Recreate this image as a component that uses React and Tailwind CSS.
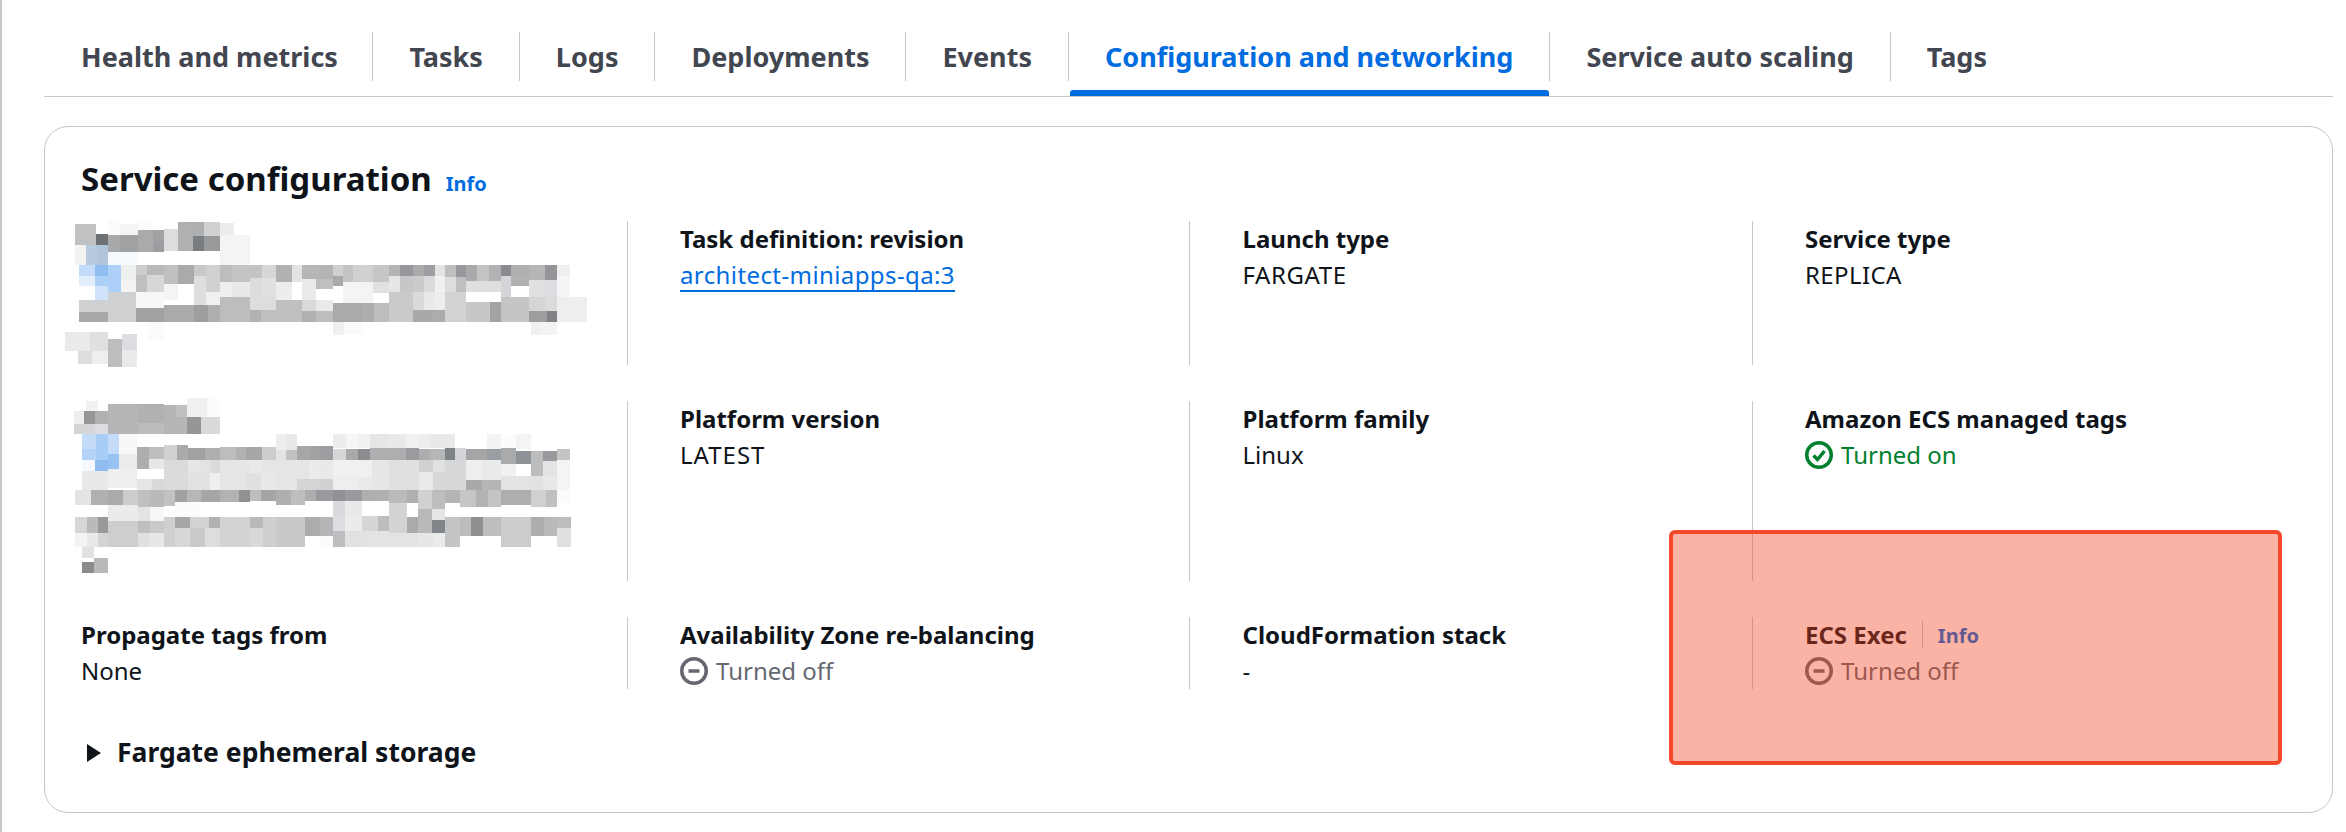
const tabs = [
  "Health and metrics",
  "Tasks",
  "Logs",
  "Deployments",
  "Events",
  "Configuration and networking",
  "Service auto scaling",
  "Tags",
];

// pixelated (redacted) blocks, cells are [x, y, w, h, colour] at 3x
const blurTopA = [
  [45,27,63,63,"#c0c1c3"],[108,57,36,33,"#6e7174"],[144,18,36,42,"#fbfbfb"],[180,27,54,33,"#f4f4f4"],[234,15,45,30,"#fbfbfb"],
  [144,60,36,50,"#a8a9ab"],[180,60,54,50,"#a0a1a3"],[234,45,45,65,"#a9aaac"],[279,45,33,33,"#a1a2a4"],[279,78,33,32,"#9c9da1"],
  [312,42,42,66,"#dcdddf"],[354,21,45,87,"#afb0b2"],[399,21,33,42,"#aeafb1"],[432,21,48,42,"#d0d1d3"],[480,24,42,36,"#ebeded"],
  [399,63,33,45,"#7a7d80"],[432,63,48,45,"#98999b"],[480,60,90,90,"#f4f4f4"],[45,90,33,60,"#f3f3f3"],[78,90,33,60,"#b8cade"],
  [111,90,33,60,"#b0c4da"],[144,110,90,40,"#f6f9fe"],[57,150,48,33,"#c4dcfa"],[105,150,39,33,"#90bdf0"],[144,150,39,33,"#acd0f8"],
  [57,183,48,30,"#e3eefc"],[105,183,39,30,"#acd0f8"],[144,183,39,48,"#acd0f8"],[105,213,39,42,"#d0e3fb"],[183,150,45,48,"#eeefef"],
  [183,198,45,33,"#f3f3f3"],[228,150,33,30,"#cbcccd"],[228,180,33,51,"#bebfc1"],[261,150,51,30,"#b8b9bb"],[261,180,51,51,"#d6d7d9"],
  [312,150,42,57,"#bfc0c2"],[354,150,48,57,"#a9aaac"],[312,207,42,48,"#f3f5f5"],[402,150,36,33,"#c8c9cb"],[402,183,36,48,"#dcdedf"],
  [438,150,42,81,"#d0d1d3"],[480,150,36,51,"#bcbdbf"],[516,150,90,51,"#c3c4c6"],[606,150,42,51,"#d6d7d9"],[648,150,48,51,"#b0b1b3"],
  [696,150,30,51,"#e3e3e4"],[726,150,93,42,"#b5b6b8"],[768,192,51,30,"#bbbcbe"],[480,201,36,45,"#eeefef"],[516,201,54,45,"#e8e9e9"],
  [570,189,36,69,"#dcdddd"],[606,189,42,69,"#dfe1e0"],[648,201,48,54,"#ecedee"],[726,192,42,63,"#e9ebeb"],[402,231,36,39,"#dcdedf"],
  [438,231,42,39,"#eff1f0"],[57,255,87,36,"#cfd0d2"],[57,291,87,30,"#a7a8aa"],[144,231,84,90,"#cfd0d2"],[228,231,84,48,"#f6f7f7"],
  [228,279,84,42,"#a0a1a3"],[312,270,90,51,"#a9aaac"],[402,270,42,51,"#9d9ea0"],[444,270,36,51,"#aeafb1"],[480,246,90,75,"#bcbdbf"],
  [570,285,33,36,"#b1b2b4"],[570,246,78,39,"#dcdedd"],[603,285,45,36,"#bfc0c2"],[648,255,78,66,"#bfc0c2"],[726,255,42,33,"#d8d9d9"],
  [768,255,51,33,"#e9ebeb"],[726,288,42,33,"#b0b1b3"],[768,288,12,33,"#bcbdbf"],[264,321,48,54,"#fbfbfb"],[15,351,75,57,"#e9ebeb"],
  [90,351,54,57,"#dfe1e0"],[144,372,42,84,"#bcbdbf"],[186,357,45,48,"#dcdde0"],[186,405,45,51,"#e9ebeb"],[54,408,42,39,"#dcdedd"],
  [96,408,48,39,"#eeeeef"],
];
const blurTopB = [
  [0,150,39,42,"#b3b4b6"],[39,150,30,33,"#cfd0d2"],[69,150,30,51,"#c3c4c6"],[99,150,60,51,"#d0d1d3"],[159,150,48,51,"#c5c6c8"],
  [207,150,33,33,"#b4b5b7"],[240,150,39,33,"#97989c"],[279,150,33,33,"#a9aaac"],[312,150,33,33,"#9d9ea2"],[345,150,30,33,"#e2e3e3"],
  [375,150,33,36,"#bebfc1"],[408,150,30,36,"#98999d"],[438,150,33,48,"#a9aaac"],[471,150,36,48,"#c3c4c6"],[507,150,36,48,"#b1b2b4"],
  [543,150,30,33,"#898b8f"],[573,150,54,33,"#aeafb1"],[573,183,54,30,"#b0b1b3"],[627,150,48,45,"#b5b6b8"],[675,150,36,45,"#949599"],
  [711,150,39,33,"#eef0f0"],[0,192,39,30,"#bfc0c2"],[39,183,30,30,"#a8a9ab"],[69,201,90,63,"#f4f4f4"],[159,201,48,33,"#e0e2e2"],
  [207,183,33,48,"#e5e7e7"],[240,183,39,48,"#c6c7c9"],[279,183,33,48,"#cacbcd"],[312,183,33,48,"#dadbdc"],[345,183,30,48,"#f0f0f1"],
  [345,231,30,54,"#eceeee"],[375,186,33,45,"#dddddf"],[408,186,30,45,"#bebfc1"],[438,198,105,33,"#dfdfe0"],[543,183,30,63,"#d4d5d8"],
  [627,195,48,51,"#dfe1e1"],[675,195,36,51,"#dcdde0"],[711,183,39,63,"#f5f5f5"],[207,231,72,54,"#c9cacc"],[279,231,33,54,"#d9dadc"],
  [312,231,33,54,"#e8e9e9"],[375,231,63,90,"#d1d2d4"],[438,261,72,60,"#c6c7c9"],[510,261,33,60,"#a2a3a5"],[543,246,84,75,"#c4c5c7"],
  [627,246,48,42,"#d4d5d7"],[675,246,36,42,"#dbdbdd"],[711,246,90,75,"#eeeeef"],[0,255,39,33,"#e9ebeb"],[0,288,39,33,"#bcbdbf"],
  [39,264,84,57,"#a9aaac"],[123,264,39,57,"#adaeb0"],[162,264,45,57,"#bcbdbf"],[207,285,72,36,"#c9cacc"],[279,285,60,36,"#a8a9ab"],
  [339,285,36,36,"#abacae"],[627,288,54,33,"#9d9ea0"],[681,288,30,33,"#828386"],[39,321,33,39,"#f0f0f0"],[72,321,57,36,"#fafafa"],
  [633,321,30,39,"#f0f0f0"],[663,321,48,39,"#f4f4f4"],
];
const blurMidA = [
  [78,18,36,30,"#f2f2f2"],[42,48,30,39,"#edeeee"],[72,48,33,39,"#959698"],[105,48,39,39,"#afb0b2"],[42,87,63,30,"#d5d6d8"],
  [105,87,39,30,"#dcdde0"],[144,27,90,90,"#b4b5b7"],[234,27,78,57,"#b0b1b3"],[234,84,78,33,"#bbbcbe"],[312,30,36,87,"#b4b5b7"],
  [348,30,33,36,"#bfc0c2"],[348,66,33,51,"#b5b6b8"],[381,9,60,57,"#eff1f1"],[441,9,39,57,"#fbfbfb"],[381,66,42,51,"#959698"],
  [423,66,57,51,"#d9dadc"],[66,117,42,45,"#c4dcfa"],[108,117,36,45,"#a8cdf6"],[144,117,33,60,"#c4dcfa"],[66,162,42,33,"#b3d3f8"],
  [144,177,33,45,"#97c2f2"],[105,195,39,33,"#90bcf0"],[108,162,36,33,"#a8cdf6"],[66,195,39,33,"#f5f9fe"],[177,117,54,60,"#f8f8f8"],
  [177,177,54,45,"#ebecec"],[231,156,36,66,"#adaeb0"],[267,156,45,36,"#bdbec0"],[267,192,45,30,"#e6e7e9"],[312,150,39,45,"#d0d1d3"],
  [351,150,33,45,"#a9aaac"],[384,159,51,36,"#a0a1a3"],[435,159,45,36,"#aeafb1"],[480,156,48,39,"#bcbdbf"],[528,156,30,39,"#b1b2b4"],
  [558,156,48,39,"#a6a7a9"],[606,156,42,39,"#cccdcf"],[648,117,30,48,"#eeeeef"],[678,117,33,48,"#e7e9e9"],[648,165,30,30,"#e3e3e4"],
  [678,165,33,30,"#c0c1c3"],[711,153,39,42,"#a6a7a9"],[750,153,30,42,"#a0a1a3"],[312,195,72,60,"#dadbdd"],[384,195,33,39,"#e6e6e7"],
  [417,195,33,39,"#e2e4e3"],[450,195,30,39,"#dadbdd"],[480,195,90,39,"#e6e6e7"],[570,195,36,39,"#e7e9eb"],[606,195,105,39,"#e4e6e6"],
  [711,195,36,57,"#e3e5e7"],[747,195,33,57,"#eaebeb"],[66,228,78,57,"#e8eaea"],[144,222,87,57,"#eeeeef"],[231,252,45,33,"#e6e6e7"],
  [276,252,36,33,"#d8d9d9"],[312,255,72,30,"#dadbdd"],[384,234,66,51,"#e2e2e3"],[450,234,30,51,"#eef0f0"],[480,234,78,51,"#e5e5e6"],
  [558,234,45,51,"#e0e0e1"],[603,234,45,51,"#e8e9e9"],[648,234,63,51,"#e4e6e6"],[711,252,69,33,"#d3d4d6"],[45,285,48,45,"#e3e3e4"],
  [93,285,51,45,"#afb0b2"],[144,285,45,45,"#a9aaac"],[189,285,45,45,"#cbcccd"],[234,285,36,51,"#bfc0c2"],[270,285,42,51,"#b9babc"],
  [312,285,33,48,"#c1c2c4"],[345,285,36,36,"#a0a1a3"],[381,285,42,36,"#b5b6b8"],[423,285,57,36,"#a5a6a8"],[480,285,57,36,"#b1b2b4"],
  [537,285,33,36,"#909193"],[570,285,33,33,"#bcbdbf"],[603,285,45,33,"#a4a5a7"],[648,285,45,45,"#aeafb1"],[693,285,42,45,"#bdbec0"],
  [735,285,33,33,"#acadaf"],[768,285,12,33,"#98999d"],[144,330,90,48,"#ebebec"],[234,336,36,42,"#e2e4e3"],[270,336,42,42,"#f6f6f6"],
  [345,321,75,45,"#fbfbfb"],[45,366,36,48,"#d5d6d8"],[81,366,33,48,"#b9babc"],[114,366,30,48,"#98999b"],[144,378,90,78,"#ccced0"],
  [234,378,36,36,"#bebfc1"],[270,378,42,36,"#c8c9cb"],[312,366,33,90,"#cfd0d2"],[345,366,45,33,"#a5a6a8"],[390,366,57,33,"#d3d3d3"],
  [447,366,33,33,"#b0b1b3"],[480,366,90,90,"#d2d3d5"],[570,366,39,33,"#b8b9bb"],[609,366,39,90,"#ccced0"],[648,366,87,90,"#c8c9cb"],
  [735,366,45,57,"#abacae"],[345,399,45,57,"#d7d8da"],[390,399,45,57,"#c9cacc"],[435,399,45,57,"#dcddde"],[570,399,39,57,"#d8d9db"],
  [45,414,36,42,"#f3f3f3"],[81,414,33,42,"#e8e9e9"],[114,414,30,42,"#d3d4d6"],[234,414,36,42,"#dfe0e2"],[270,414,42,42,"#e6e7e7"],
  [66,456,36,33,"#e2e2e3"],[66,501,36,33,"#8b8c8e"],[102,489,42,45,"#b8b9bb"],
];
const blurMidB = [
  [39,117,39,42,"#eceeee"],[78,117,36,42,"#f6f6f6"],[114,117,36,42,"#f1f1f1"],[150,117,57,42,"#e5e7e7"],[207,117,51,42,"#e8eaea"],
  [258,117,39,42,"#f0f2f2"],[297,117,30,42,"#ecedee"],[327,117,78,42,"#e8eaea"],[501,117,42,45,"#f2f4f4"],[543,117,45,42,"#fbfcfc"],
  [588,117,45,45,"#f4f4f4"],[0,153,39,42,"#9c9da1"],[39,162,39,33,"#d6d7d8"],[78,162,36,33,"#a8a9ab"],[114,162,36,33,"#8c8d91"],
  [150,159,57,36,"#aeafb1"],[207,159,51,36,"#adaeb0"],[258,159,39,36,"#9a9b9f"],[297,162,30,33,"#acadaf"],[327,162,48,33,"#b5b6b8"],
  [375,159,30,36,"#7f8286"],[405,159,33,36,"#d4d5d8"],[438,162,63,33,"#a4a5a7"],[501,162,42,33,"#9a9da1"],[543,159,45,48,"#a9aaac"],
  [588,168,45,39,"#8f9296"],[633,168,36,75,"#bcbdbf"],[669,168,42,30,"#98999d"],[711,162,39,33,"#c3c4c6"],[0,195,39,57,"#e9e9ea"],
  [39,195,117,51,"#f0f0f0"],[156,195,51,51,"#e5e7e6"],[207,195,90,51,"#e0e0e1"],[297,195,42,36,"#d0d1d3"],[339,195,36,36,"#e0e2e1"],
  [375,195,63,90,"#d6d7d9"],[438,195,48,60,"#eeeeef"],[486,195,57,60,"#e9ebeb"],[543,207,45,36,"#f1f1f1"],[669,198,42,48,"#e3e3e4"],
  [711,195,39,90,"#f4f4f4"],[0,252,39,33,"#d0d1d3"],[39,246,75,39,"#eeeeef"],[114,246,42,39,"#eaeaeb"],[156,246,51,39,"#e6e8e7"],
  [207,246,90,39,"#e0e0e1"],[297,231,42,54,"#e9ebeb"],[339,231,36,54,"#d7d8da"],[438,255,48,30,"#a8a9ab"],[486,255,57,30,"#b5b6b8"],
  [543,243,90,42,"#e2e4e3"],[633,243,36,42,"#e2e2e3"],[669,243,42,42,"#e8e8e9"],[0,285,39,33,"#9a9b9f"],[39,285,36,33,"#909195"],
  [75,285,51,33,"#9a9b9f"],[126,285,51,33,"#aeafb1"],[177,285,30,33,"#b0b1b3"],[207,285,54,39,"#b9babc"],[261,285,33,39,"#aeafb1"],
  [294,285,42,57,"#d0d1d3"],[336,285,39,57,"#bcbdbf"],[375,285,45,39,"#b3b4b6"],[420,285,48,51,"#c5c6c8"],[468,285,36,51,"#b2b3b5"],
  [504,285,39,51,"#c3c4c6"],[543,285,90,45,"#adaeb0"],[633,285,45,51,"#ced0d2"],[678,285,33,51,"#bfc0c2"],[711,285,39,36,"#fbfbfb"],
  [39,318,36,48,"#d9dadd"],[75,318,51,48,"#e9e9ea"],[207,324,54,51,"#d2d3d5"],[294,342,42,33,"#b8b9bb"],[336,342,39,33,"#e5e5e6"],
  [0,366,39,57,"#b5b6b8"],[39,366,36,42,"#dddee1"],[75,366,51,42,"#ebebec"],[126,363,48,45,"#d5d6d8"],[174,363,33,45,"#bcbdbf"],
  [207,375,54,39,"#d2d3d5"],[261,366,33,48,"#a9aaac"],[294,375,42,39,"#b8b9bb"],[336,375,39,39,"#81858a"],[375,366,45,60,"#c3c4c6"],
  [420,366,33,57,"#bbbcbe"],[453,366,36,57,"#8e8f91"],[489,366,54,57,"#bdbec0"],[543,366,90,90,"#cbcccd"],[633,366,39,57,"#acadaf"],
  [672,366,39,57,"#b8b9bb"],[711,366,42,33,"#bcbdbf"],[711,399,42,57,"#dfe1e0"],[39,408,36,48,"#bdbec0"],[75,408,66,48,"#e0e2e1"],
  [141,408,66,48,"#e3e3e4"],[207,414,87,42,"#e2e3e4"],[294,414,48,42,"#e6e6e7"],[342,414,33,42,"#ebebec"],[375,426,45,30,"#c3c4c6"],
  [0,423,39,33,"#fbfbfb"],
];

function Mosaic({ a, b, height }) {
  return (
    <svg
      width="540"
      height={height}
      viewBox={`0 0 1620 ${height * 3}`}
      shapeRendering="crispEdges"
      className="relative -ml-[21px] -mt-[6px] block max-w-none"
    >
      {a.map(([x, y, w, h, c], i) => (
        <rect key={i} x={x} y={y} width={w} height={h} fill={c} />
      ))}
      <g transform="translate(780 0)">
        {b.map(([x, y, w, h, c], i) => (
          <rect key={i} x={x} y={y} width={w} height={h} fill={c} />
        ))}
      </g>
    </svg>
  );
}

function Cell({ label, children }) {
  return (
    <div className="border-l border-[#c6c6cd] pl-[52.5px]">
      <div className="text-[24px] font-bold leading-[36px] text-[#0f141a]">{label}</div>
      <div className="text-[24px] leading-[36px] text-[#0f141a]">{children}</div>
    </div>
  );
}

function Status({ on }) {
  return (
    <span className={`flex items-center gap-[8px] ${on ? "text-[#00802f]" : "text-[#656871]"}`}>
      <svg width="28" height="28" viewBox="0 0 28 28" fill="none" stroke="currentColor" strokeWidth="3.5">
        <circle cx="14" cy="14" r="12.25" />
        {on ? (
          <path d="M8.5 14.5l4 4 7-8.5" strokeLinejoin="miter" />
        ) : (
          <path d="M8.5 14h11" />
        )}
      </svg>
      {on ? "Turned on" : "Turned off"}
    </span>
  );
}

export default function App() {
  return (
    <div className="relative h-[832px] w-[2346px] overflow-hidden border-l-2 border-[#c6c6cd] bg-white pl-[42px] pr-[13px] [font-family:'Noto_Sans',sans-serif]">
      <div className="flex h-[97px] items-start border-b border-[#c6c6cd] pl-px pt-[32px]">
        {tabs.map((tab, i) => (
          <div key={tab} className="relative h-[64px]">
            <div
              className={`flex h-[49px] items-center pt-px text-[27px] font-bold ${
                i === 0 ? "pl-[36px] pr-[34.5px]" : "px-[36px]"
              } ${i < tabs.length - 1 ? "border-r border-[#c6c6cd]" : ""} ${
                tab.startsWith("Configuration") ? "text-[#006ce0]" : "text-[#424650]"
              }`}
            >
              {tab}
            </div>
            {tab.startsWith("Configuration") && (
              <div className="absolute bottom-0 left-px right-px h-[6px] rounded-t-[3px] bg-[#006ce0]" />
            )}
          </div>
        ))}
      </div>

      <section className="mt-[29px] h-[687px] rounded-[24px] border border-[#c6c6cd] pl-[36px]">
        <div className="flex h-[94px] items-center pt-[10px]">
          <h2 className="text-[33px] font-bold text-[#0f141a]">Service configuration</h2>
          <a className="ml-[14px] mt-[10px] text-[20px] font-bold text-[#006ce0]">Info</a>
        </div>

        <div className="grid grid-cols-[545.5px_562.5px_562.5px_1fr] grid-rows-[144px_180px_72px] gap-y-[36px]">
          <div>
            <Mosaic a={blurTopA} b={blurTopB} height={155} />
          </div>
          <Cell label="Task definition: revision">
            <a className="tracking-[0.4px] text-[#006ce0] underline decoration-2 underline-offset-[6px] [text-decoration-skip-ink:none]">
              architect-miniapps-qa:3
            </a>
          </Cell>
          <Cell label="Launch type">
            <span className="tracking-[0.6px]">FARGATE</span>
          </Cell>
          <Cell label="Service type">
            <span className="tracking-[0.4px]">REPLICA</span>
          </Cell>

          <div>
            <Mosaic a={blurMidA} b={blurMidB} height={185} />
          </div>
          <Cell label="Platform version">
            <span className="tracking-[1px]">LATEST</span>
          </Cell>
          <Cell label="Platform family">Linux</Cell>
          <Cell label="Amazon ECS managed tags">
            <Status on />
          </Cell>

          <div>
            <div className="text-[24px] font-bold leading-[36px] text-[#0f141a]">Propagate tags from</div>
            <div className="text-[24px] leading-[36px] text-[#0f141a]">None</div>
          </div>
          <Cell label="Availability Zone re-balancing">
            <Status />
          </Cell>
          <Cell label="CloudFormation stack">-</Cell>
          <div className="border-l border-[#c6c6cd] pl-[52.5px]">
            <div className="flex h-[36px] items-center">
              <span className="text-[24px] font-bold text-[#0f141a]">ECS Exec</span>
              <span className="ml-[15px] h-[28px] w-px bg-[#c6c6cd]" />
              <a className="ml-[15px] mt-[2px] text-[20px] font-bold text-[#006ce0]">Info</a>
            </div>
            <div className="text-[24px] leading-[36px]">
              <Status />
            </div>
          </div>
        </div>

        <div className="mt-[46px] flex h-[36px] items-center gap-[16px] pl-[6px]">
          <svg width="14" height="18" viewBox="0 0 14 18">
            <path d="M0 0l14 9-14 9z" fill="#0f141a" />
          </svg>
          <span className="text-[26.5px] font-bold text-[#0f141a]">Fargate ephemeral storage</span>
        </div>
      </section>

      <div className="absolute left-[1667px] top-[530px] h-[235px] w-[613px] rounded-[6px] border-4 border-[#f4482a] bg-[#f2411e]/40" />
    </div>
  );
}
